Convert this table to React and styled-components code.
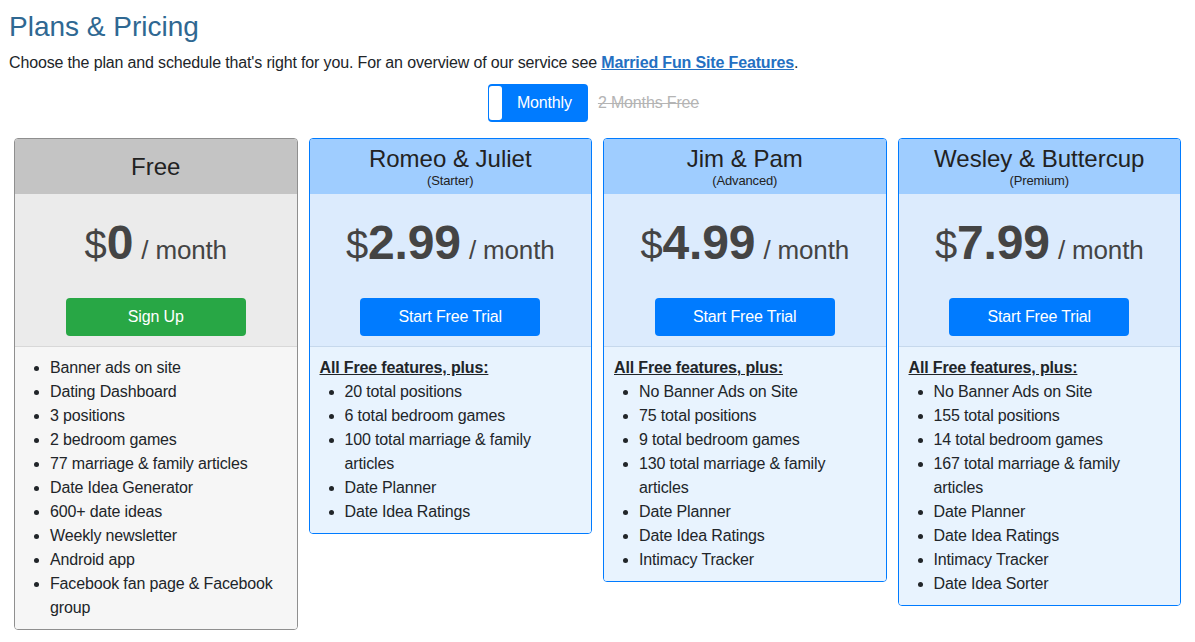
import styled, { createGlobalStyle } from "styled-components";

const GlobalStyle = createGlobalStyle`
  body {
    margin: 0;
    background: #fff;
    font-family: "Segoe UI", "Liberation Sans", Arial, sans-serif;
    letter-spacing: -0.15px;
    color: #212529;
  }
`;

const Page = styled.div`
  padding: 10px 9px 0 9px;
`;

const Title = styled.h3`
  margin: 0 0 6px 0;
  font-size: 28px;
  font-weight: 500;
  line-height: 34px;
  letter-spacing: 0;
  color: #2f6892;
`;

const Lead = styled.p`
  margin: 0;
  font-size: 16px;
  line-height: 24px;
  padding-top: 1px;
`;

const Link = styled.a`
  color: #2470c2;
  font-weight: bold;
  text-decoration: underline;
`;

const ToggleRow = styled.div`
  display: flex;
  justify-content: center;
  align-items: center;
  gap: 10px;
  margin-top: 9px;
  padding-right: 8px;
`;

const Toggle = styled.div`
  display: flex;
  align-items: center;
  width: 100px;
  height: 38px;
  box-sizing: border-box;
  padding: 2px 1px;
  background: #007bff;
  border-radius: 4px;
`;

const Knob = styled.span`
  width: 13px;
  height: 34px;
  background: #fff;
  border-radius: 3px;
`;

const ToggleLabel = styled.span`
  flex: 1;
  text-align: center;
  color: #fff;
  font-size: 16px;
`;

const Struck = styled.span`
  color: #b4b4b4;
  font-size: 16px;
  text-decoration: line-through;
`;

const Cards = styled.div`
  display: flex;
  align-items: flex-start;
  gap: 11px;
  margin: 16px 5px 0 5px;
`;

const Card = styled.div`
  flex: 1;
  border: 1px solid ${(p) => (p.$free ? "#8f8f8f" : "#007bff")};
  border-radius: 4px;
  overflow: hidden;
`;

const Header = styled.div`
  height: 55px;
  box-sizing: border-box;
  display: flex;
  flex-direction: column;
  justify-content: center;
  align-items: center;
  padding-top: 1px;
  background: ${(p) => (p.$free ? "#c4c4c4" : "#9fcdff")};
`;

const PlanName = styled.div`
  font-size: 24px;
  font-weight: 500;
  line-height: 28px;
  letter-spacing: 0;
  color: #222;
`;

const PlanTier = styled.div`
  font-size: 13px;
  line-height: 16px;
  color: #222;
`;

const PriceBox = styled.div`
  display: flex;
  flex-direction: column;
  align-items: center;
  padding: 25px 0 10px 0;
  background: ${(p) => (p.$free ? "#ebebeb" : "#dcebfd")};
  border-bottom: 1px solid ${(p) => (p.$free ? "#d8d8d8" : "#c6d8ec")};
`;

const Price = styled.div`
  height: 62px;
  line-height: 62px;
  color: #444;
  white-space: nowrap;
`;

const Dollar = styled.span`
  font-size: 40px;
  line-height: 1;
`;

const Amount = styled.span`
  font-size: 48px;
  font-weight: 600;
  line-height: 1;
`;

const Per = styled.span`
  font-size: 26px;
  line-height: 1;
  margin-left: 8px;
`;

const Button = styled.button`
  margin-top: 17px;
  width: 180px;
  height: 38px;
  border: none;
  border-radius: 4px;
  font-family: inherit;
  font-size: 16px;
  letter-spacing: inherit;
  color: #fff;
  background: ${(p) => p.$bg};
  cursor: pointer;
`;

const Features = styled.div`
  padding: 9px 10px 9px 10px;
  background: ${(p) => (p.$free ? "#f6f6f6" : "#e8f3fe")};
  font-size: 16px;
  line-height: 24px;
`;

const Plus = styled.div`
  font-weight: bold;
  text-decoration: underline;
`;

const List = styled.ul`
  margin: 0;
  padding-left: 25px;
`;

const plans = [
  {
    name: "Free",
    free: true,
    price: "0",
    button: "Sign Up",
    features: [
      "Banner ads on site",
      "Dating Dashboard",
      "3 positions",
      "2 bedroom games",
      "77 marriage & family articles",
      "Date Idea Generator",
      "600+ date ideas",
      "Weekly newsletter",
      "Android app",
      "Facebook fan page & Facebook group",
    ],
  },
  {
    name: "Romeo & Juliet",
    tier: "(Starter)",
    price: "2.99",
    button: "Start Free Trial",
    features: [
      "20 total positions",
      "6 total bedroom games",
      "100 total marriage & family articles",
      "Date Planner",
      "Date Idea Ratings",
    ],
  },
  {
    name: "Jim & Pam",
    tier: "(Advanced)",
    price: "4.99",
    button: "Start Free Trial",
    features: [
      "No Banner Ads on Site",
      "75 total positions",
      "9 total bedroom games",
      "130 total marriage & family articles",
      "Date Planner",
      "Date Idea Ratings",
      "Intimacy Tracker",
    ],
  },
  {
    name: "Wesley & Buttercup",
    tier: "(Premium)",
    price: "7.99",
    button: "Start Free Trial",
    features: [
      "No Banner Ads on Site",
      "155 total positions",
      "14 total bedroom games",
      "167 total marriage & family articles",
      "Date Planner",
      "Date Idea Ratings",
      "Intimacy Tracker",
      "Date Idea Sorter",
    ],
  },
];

export default function App() {
  return (
    <>
      <GlobalStyle />
      <Page>
        <Title>Plans &amp; Pricing</Title>
        <Lead>
          Choose the plan and schedule that's right for you. For an overview of
          our service see <Link href="#">Married Fun Site Features</Link>.
        </Lead>
        <ToggleRow>
          <Toggle>
            <Knob />
            <ToggleLabel>Monthly</ToggleLabel>
          </Toggle>
          <Struck>2 Months Free</Struck>
        </ToggleRow>
        <Cards>
          {plans.map((plan) => (
            <Card key={plan.name} $free={plan.free}>
              <Header $free={plan.free}>
                <PlanName>{plan.name}</PlanName>
                {plan.tier && <PlanTier>{plan.tier}</PlanTier>}
              </Header>
              <PriceBox $free={plan.free}>
                <Price>
                  <Dollar>$</Dollar>
                  <Amount>{plan.price}</Amount>
                  <Per>/ month</Per>
                </Price>
                <Button $bg={plan.free ? "#28a745" : "#007bff"}>
                  {plan.button}
                </Button>
              </PriceBox>
              <Features $free={plan.free}>
                {!plan.free && <Plus>All Free features, plus:</Plus>}
                <List>
                  {plan.features.map((f) => (
                    <li key={f}>{f}</li>
                  ))}
                </List>
              </Features>
            </Card>
          ))}
        </Cards>
      </Page>
    </>
  );
}
